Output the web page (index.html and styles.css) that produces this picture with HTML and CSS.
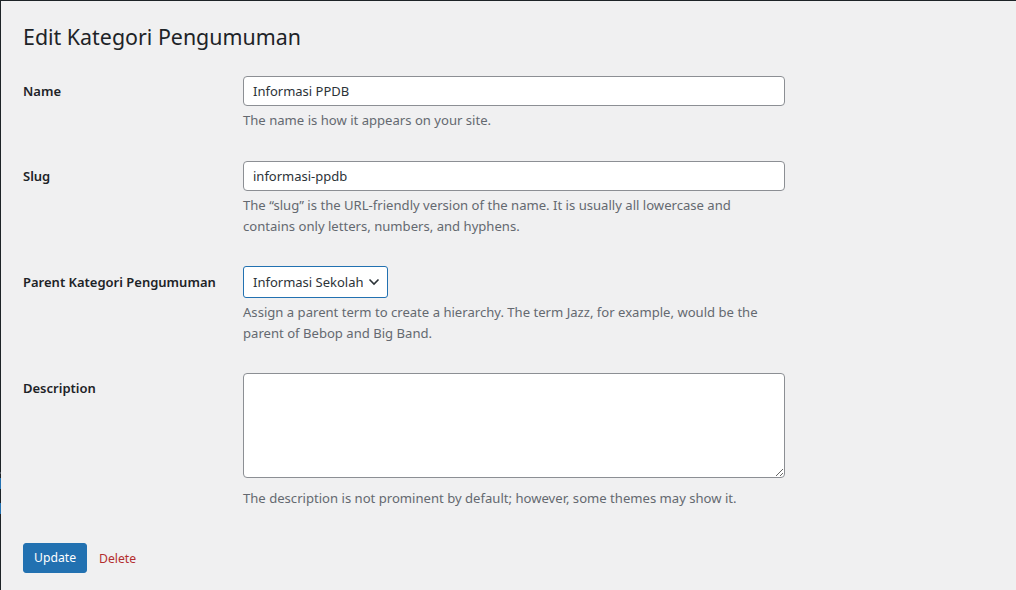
FILE: index.html
```html
<!DOCTYPE html>
<html lang="en">
<head>
<meta charset="utf-8">
<title>Edit Kategori Pengumuman</title>
<link rel="stylesheet" href="styles.css">
</head>
<body>
<div class="screen">
  <div class="menu-edge"></div>
  <main class="wrap">
    <h1 class="title">Edit Kategori Pengumuman</h1>
    <form class="form">
      <div class="row row-name">
        <label class="label" for="name">Name</label>
        <div class="field">
          <input id="name" class="input" type="text" value="Informasi PPDB">
          <p class="desc">The name is how it appears on your site.</p>
        </div>
      </div>
      <div class="row row-tight">
        <label class="label" for="slug">Slug</label>
        <div class="field">
          <input id="slug" class="input" type="text" value="informasi-ppdb">
          <p class="desc">The “slug” is the URL-friendly version of the name. It is usually all lowercase and contains only letters, numbers, and hyphens.</p>
        </div>
      </div>
      <div class="row row-tight">
        <label class="label label-select" for="parent">Parent Kategori Pengumuman</label>
        <div class="field">
          <div class="select-wrap">
            <select id="parent" class="select">
              <option>Informasi Sekolah</option>
            </select>
            <svg class="chevron" width="12" height="8" viewBox="0 0 12 8" aria-hidden="true"><path d="M1.5 1.5 L6 6 L10.5 1.5" fill="none" stroke="#2c3338" stroke-width="1.6"/></svg>
          </div>
          <p class="desc">Assign a parent term to create a hierarchy. The term Jazz, for example, would be the parent of Bebop and Big Band.</p>
        </div>
      </div>
      <div class="row">
        <label class="label" for="description">Description</label>
        <div class="field">
          <textarea id="description" class="textarea"></textarea>
          <p class="desc desc-ta">The description is not prominent by default; however, some themes may show it.</p>
        </div>
      </div>
      <div class="actions">
        <button type="button" class="btn-primary">Update</button>
        <a class="delete" href="#">Delete</a>
      </div>
    </form>
  </main>
</div>
</body>
</html>
```
FILE: styles.css
```css
* { box-sizing: border-box; }
html, body { margin: 0; padding: 0; }
body {
  background: #f0f0f1;
  font-family: "Noto Sans", "Open Sans", sans-serif;
  color: #1d2327;
  font-size: 13px;
  width: 1016px;
  height: 590px;
  overflow: hidden;
}
.screen {
  display: flex;
  height: 590px;
  border-top: 1px solid #1d2327;
}
.menu-edge {
  width: 1px;
  flex: none;
  background: linear-gradient(to bottom,
    #1d2327 0, #1d2327 471px,
    #50575e 471px, #50575e 473px,
    #1d2327 473px, #1d2327 477px,
    #2271b1 477px, #2271b1 488px,
    #1d2327 488px, #1d2327 502px,
    #2271b1 502px, #2271b1 513px,
    #1d2327 513px);
}
.wrap {
  flex: 1;
  padding: 0 0 0 22px;
}
.title {
  margin: 0;
  padding: 21px 0 0;
  font-size: 21.4px;
  font-weight: 400;
  line-height: 30px;
  color: #1d2327;
}
.form { margin-top: 9px; }
.row {
  display: grid;
  grid-template-columns: 220px 542px;
  padding: 15px 0;
}
.row-tight { padding-bottom: 14px; }
.label {
  font-size: 13px;
  font-weight: 600;
  line-height: 18px;
  color: #1d2327;
  padding-top: 6px;
}
.label-select { padding-top: 7px; }
.field { display: flex; flex-direction: column; align-items: flex-start; }
.input {
  width: 542px;
  height: 30px;
  border: 1px solid #8c8f94;
  border-radius: 4px;
  background: #fff;
  padding: 0 9px;
  font: 13px "Noto Sans", "Open Sans", sans-serif;
  color: #2c3338;
  margin: 0;
}
.desc {
  margin: 4px 0 0;
  max-width: 530px;
  font-size: 13.1px;
  line-height: 21px;
  color: #646970;
}
.select-wrap { position: relative; }
.select {
  appearance: none;
  -webkit-appearance: none;
  height: 32px;
  width: 145px;
  border: 1px solid #2271b1;
  border-radius: 3px;
  background: #fff;
  padding: 0 24px 0 9px;
  font: 13px "Noto Sans", "Open Sans", sans-serif;
  color: #2c3338;
  margin: 0;
}
.chevron { position: absolute; right: 8px; top: 12px; pointer-events: none; }
.textarea {
  display: block;
  width: 542px;
  height: 105px;
  border: 1px solid #8c8f94;
  border-radius: 4px;
  background: #fff;
  margin: 0;
  resize: both;
}
.desc-ta { margin-top: 10px; }
.actions {
  display: flex;
  align-items: center;
  gap: 12px;
  padding-top: 19px;
}
.btn-primary {
  height: 30px;
  padding: 0 10px;
  background: #2271b1;
  border: 1px solid #2271b1;
  border-radius: 3px;
  color: #fff;
  font: 12.2px "Noto Sans", "Open Sans", sans-serif;
  line-height: 28px;
}
.delete {
  color: #b32d2e;
  font-size: 12.2px;
  text-decoration: none;
}
```
